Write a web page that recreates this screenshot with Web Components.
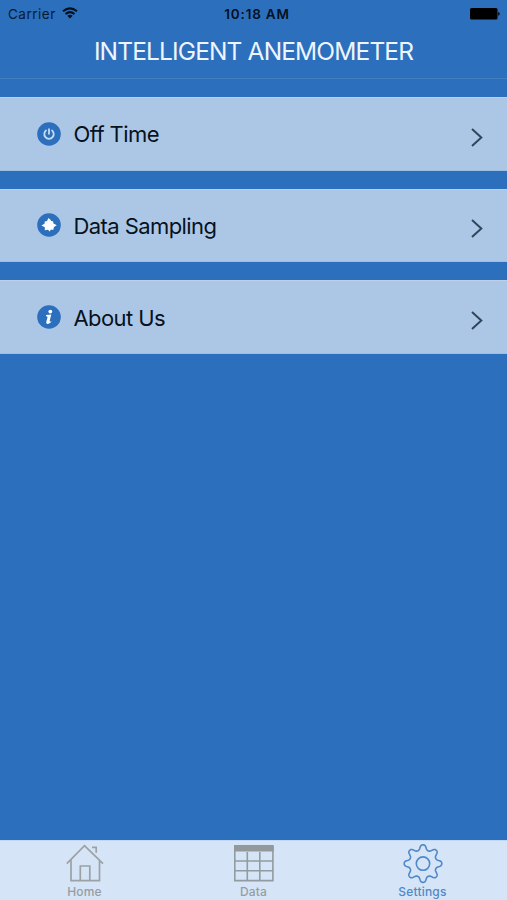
<!DOCTYPE html>
<html lang="en">
<head>
<meta charset="utf-8">
<title>Intelligent Anemometer</title>
<style>
html,body{margin:0;height:100%}
body{background:#2c6fbc;font-family:Inter,"Liberation Sans",sans-serif;overflow:hidden}
</style>
</head>
<body>
<anemo-app></anemo-app>
<script>
function define(name, html, setup) {
  const t = document.createElement('template');
  t.innerHTML = html;
  customElements.define(name, class extends HTMLElement {
    constructor() {
      super();
      this.attachShadow({mode: 'open'}).append(t.content.cloneNode(true));
    }
    connectedCallback() { if (setup) setup(this); }
  });
}

// Closed outline of an eight-toothed cog centred on the origin.
function cogPath() {
  let d = '';
  for (let i = 0; i < 240; i++) {
    const a = i / 240 * 2 * Math.PI, c = Math.cos(8 * a);
    const r = 16.3 + 2.5 * Math.tanh(1.3 * c) / Math.tanh(1.3);
    const w = a - 0.012 * Math.sin(8 * a);
    d += (i ? 'L' : 'M') + (r * Math.sin(w)).toFixed(2) + ' ' + (-r * Math.cos(w)).toFixed(2);
  }
  return d + 'Z';
}

const icons = {
  power: `<svg width="24" height="24" viewBox="0 0 24 24" fill="none"><circle cx="12" cy="12" r="11.8" fill="#2c6fbc"/><path d="M9.5 8.1A4.7 4.7 0 1 0 14.5 8.1M12 6.6V12.6" stroke="#c5dcf3" stroke-width="1.8"/></svg>`,
  sampling: `<svg width="24" height="24" viewBox="0 0 24 24"><circle cx="12" cy="12" r="11.8" fill="#2c6fbc"/><path d="M11.5 5L13.2 6.5L14.3 8L16 8.2L16.5 10.4L19.8 12.2L17 14L16.2 16.9L13.9 16.6L12.7 18.6L11 16.7L7.8 17.2L7.8 14.2L4.4 12.4L7.5 10.7L7.8 8.4L10 8Z" fill="#fff"/></svg>`,
  info: `<svg width="24" height="24" viewBox="0 0 24 24"><circle cx="12" cy="12" r="11.8" fill="#2c6fbc"/><circle cx="13.3" cy="6.6" r="1.9" fill="#fff"/><path d="M9 10L14.3 9.6L12.6 16Q12.5 17.2 14.7 16Q13.2 19 10.8 19Q8.7 19 9.4 16.6L10.5 12.2Q10.7 11.2 9 11.3Z" fill="#fff"/></svg>`,
  home: `<svg width="40" height="40" viewBox="0 0 40 40" fill="none" stroke="#9ba1a4" stroke-width="1.7"><path d="M1.8 19.6L19.5 1.6L38 19.6M6 16V36.6H34.5V16M15.3 36.6V22H24.8V36.6M27 3.3H31.2V8.7"/></svg>`,
  data: `<svg width="40" height="40" viewBox="0 0 40 40" fill="none" stroke="#929b9f" stroke-width="1.6"><path d="M.8 2V36.6H38.9V2M.8 17H38.9M.8 26.8H38.9M13.3 8V36.6M25.8 8V36.6"/><path d="M0 .9H39.7V7.6H0Z" fill="#91999b" stroke="none"/></svg>`,
  settings: `<svg width="40" height="40" viewBox="-20 -20 40 40" fill="none" stroke="#5088c8" stroke-width="1.6"><g transform="translate(0 -.4)"><path d="${cogPath()}"/><circle r="6.7"/></g></svg>`
};

define('status-bar', `<style>
:host{display:grid;grid-template-columns:1fr auto 1fr;align-items:center;height:27px;padding:0 7px 0 8px;color:#071b30;font-size:13.5px;line-height:16px;box-sizing:border-box}
.left{display:flex;align-items:center;gap:6px}
.car{letter-spacing:.5px}
.time{font-weight:600;color:#03101e;letter-spacing:.8px;margin-left:6px}
.batt{justify-self:end}
svg{display:block}
.left svg{margin-top:-2px}
</style>
<div class="left"><span class="car">Carrier</span>
<svg width="16" height="12" viewBox="0 0 16 12" fill="none" stroke="#03101e" stroke-width="2"><path d="M1 4.3Q8 -1.5 15 4.3M3.5 7Q8 3.3 12.5 7"/><path d="M5.3 8.7Q8 6.7 10.7 8.7L8 11.5Z" fill="#03101e" stroke="none"/></svg></div>
<span class="time">10:18 AM</span>
<svg class="batt" width="30" height="12" viewBox="0 0 30 12"><rect width="27.5" height="11.5" rx="1.5"/><path d="M28.2 4Q29.7 4.4 29.7 5.8Q29.7 7.3 28.2 7.7Z"/></svg>`);

define('nav-title', `<style>
:host{display:flex;align-items:center;justify-content:center;height:52px;box-sizing:border-box;padding-bottom:3px;border-bottom:1px solid #407fc0;color:#edf5ff;font-size:24.5px;line-height:30px;white-space:nowrap}
span{letter-spacing:-.86px}
</style><span><slot></slot></span>`);

define('menu-row', `<style>
:host{display:flex;align-items:center;height:73.4px;box-sizing:border-box;padding:0 24px 0 37px;background:#acc7e6;border-top:1px solid #bbd1eb;border-bottom:1px solid #9fbfe2;color:#07121d;font-size:22px;line-height:28px}
.icon{width:24px;height:24px;margin-right:12.5px}
.label{flex:1;letter-spacing:-.58px;padding-top:1px}
svg{display:block}
.arrow{margin-top:7px}
</style><div class="icon"></div><span class="label"><slot></slot></span>
<svg class="arrow" width="12" height="19" viewBox="0 0 12 19" fill="none" stroke="#304559" stroke-width="2"><path d="M1 1L10.3 9.5L1 18"/></svg>`,
el => { el.shadowRoot.querySelector('.icon').innerHTML = icons[el.getAttribute('icon')]; });

define('tab-item', `<style>
:host{display:flex;flex-direction:column;align-items:center;color:#959da3;font-size:12px;line-height:14px;padding-top:3px}
:host([active]){color:#5088c8}
.icon{height:40px}
.label{margin-top:1px;letter-spacing:.2px;font-weight:500}
svg{display:block}
</style><div class="icon"></div><span class="label"><slot></slot></span>`,
el => { el.shadowRoot.querySelector('.icon').innerHTML = icons[el.getAttribute('icon')]; });

define('tab-bar', `<style>
:host{display:grid;grid-template-columns:repeat(3,1fr);height:60px;background:#d5e5f7;box-sizing:border-box;border-top:1px solid #c0d7ef}
</style><slot></slot>`);

define('anemo-app', `<style>
:host{display:flex;flex-direction:column;height:900px;background:#2c6fbc}
main{flex:1;display:flex;flex-direction:column;gap:18.2px;padding-top:18.2px}
</style>
<status-bar></status-bar>
<nav-title>INTELLIGENT ANEMOMETER</nav-title>
<main>
<menu-row icon="power">Off Time</menu-row>
<menu-row icon="sampling">Data Sampling</menu-row>
<menu-row icon="info">About Us</menu-row>
</main>
<tab-bar>
<tab-item icon="home">Home</tab-item>
<tab-item icon="data">Data</tab-item>
<tab-item icon="settings" active>Settings</tab-item>
</tab-bar>`);
</script>
</body>
</html>
